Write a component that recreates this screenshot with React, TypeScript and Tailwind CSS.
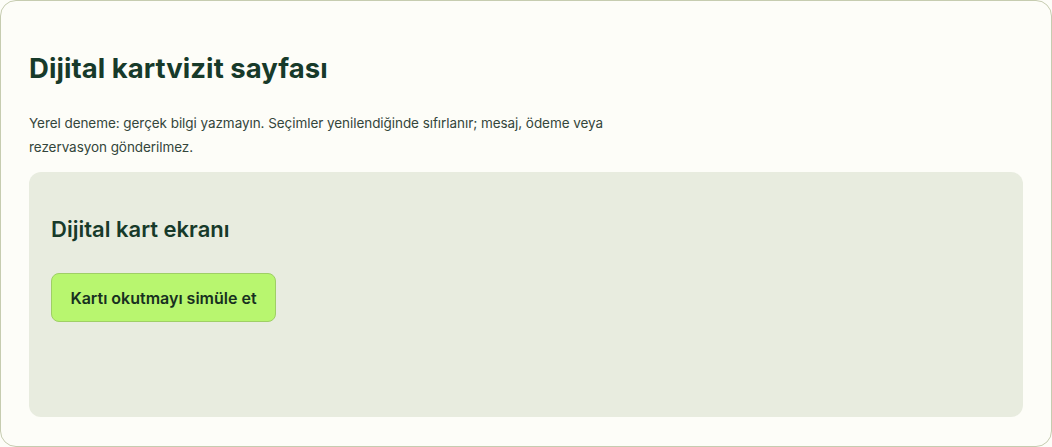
export default function App() {
  return (
    <div
      className="h-[447px] w-[1052px] bg-[#fdfdf8] text-[#173a2a]"
      style={{ fontFamily: 'Inter, "Noto Sans", sans-serif' }}
    >
      <main className="flex h-full flex-col rounded-[16px] border border-[#c6ccb0] bg-[#fdfdf8] px-[28px] pb-[29px] pt-[50px]">
        <h1 className="text-[27.5px] font-bold leading-[34px] tracking-[0.05px] text-[#173a2a]">
          Dijital kartvizit sayfası
        </h1>
        <p className="mt-[26px] max-w-[610px] text-[13.5px] leading-[24px] tracking-[-0.06px] text-[#34463b]">
          Yerel deneme: gerçek bilgi yazmayın. Seçimler yenilendiğinde sıfırlanır; mesaj, ödeme veya
          rezervasyon gönderilmez.
        </p>
        <section className="mt-[13px] flex-1 rounded-[12px] bg-[#e8ecdf] px-[22px] pt-[41px]">
          <h2 className="text-[22px] font-semibold leading-[32px] text-[#173a2a]">Dijital kart ekranı</h2>
          <button className="mt-[28px] h-[49px] w-[225px] rounded-[8px] border border-[#9fcf66] bg-[#b8f66f] text-[16px] font-semibold text-[#17301f]">
            Kartı okutmayı simüle et
          </button>
        </section>
      </main>
    </div>
  );
}
